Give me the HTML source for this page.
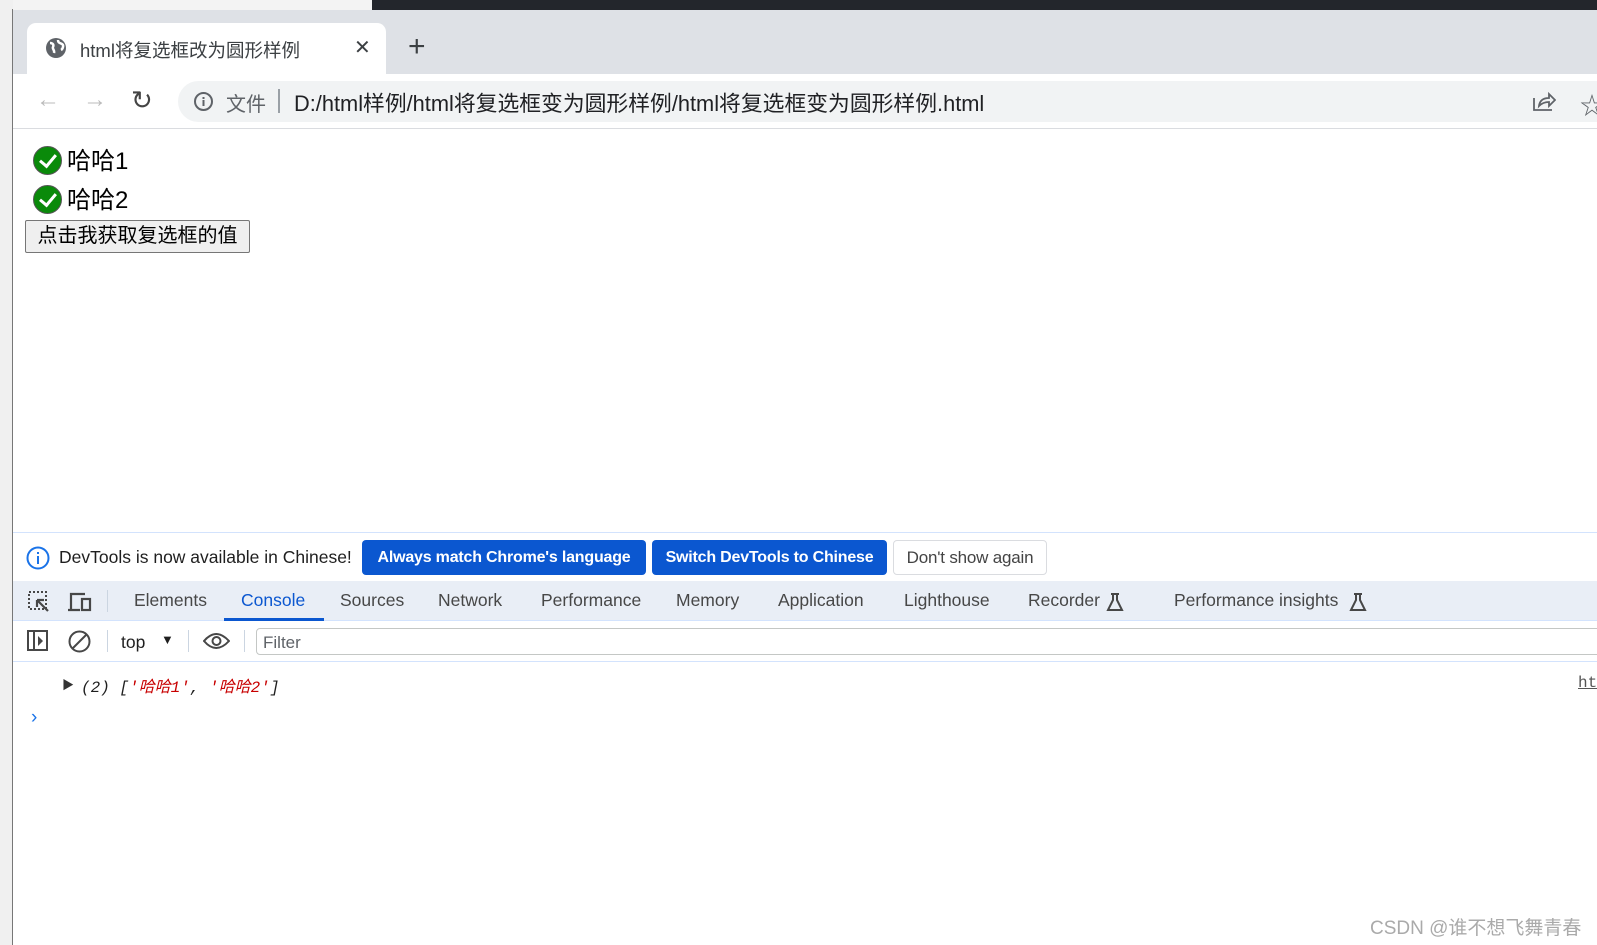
<!DOCTYPE html>
<html><head><meta charset="utf-8"><style>
*{margin:0;padding:0;box-sizing:border-box}
body{width:1597px;height:945px;overflow:hidden;background:#fff;position:relative;font-family:"Liberation Sans","Noto Sans CJK SC",sans-serif;color:#202124}
.a{position:absolute;white-space:nowrap}
.sep{position:absolute;width:1px;background:#cbd5e1}
.tab{position:absolute;top:590px;font-size:17.5px;color:#474747}
.btn{position:absolute;top:540px;height:35px;border-radius:4px;font-size:16px;font-weight:bold;line-height:35px;padding:0 6px;background:#0b57d0;color:#fff;overflow:hidden;text-align:center;letter-spacing:-0.2px}
.chk{position:absolute;left:33px;width:29px;height:29px;border-radius:50%;background:#0a8a0a;border:1px solid #555}
.chk:after{content:"";position:absolute;left:9px;top:4px;width:7px;height:13px;border:solid #fff;border-width:0 3px 3px 0;transform:rotate(40deg)}
</style></head><body>
<div class="a" style="left:0;top:0;width:13px;height:945px;background:#f0f0f0"></div>
<div class="a" style="left:13px;top:0;width:359px;height:10px;background:#f3f3f3"></div>
<div class="a" style="left:372px;top:0;width:1225px;height:10px;background:#23262c"></div>
<div class="a" style="left:12px;top:9px;width:1px;height:936px;background:#777"></div>
<div class="a" style="left:13px;top:10px;width:1584px;height:64px;background:#dee1e6"></div>
<div class="a" style="left:27px;top:23px;width:359px;height:51px;background:#fff;border-radius:9px 9px 0 0"></div>
<svg class="a" style="left:45px;top:37px" width="22" height="22" viewBox="0 0 22 22"><circle cx="11" cy="11" r="10" fill="#5f6368"/><path d="M5 6c3 0 4 2 3 4s2 3 1 6M13 3c0 3 2 3 4 4s1 5-1 6" stroke="#fff" stroke-width="2.5" fill="none"/></svg>
<div class="a" style="left:80px;top:37px;font-size:18.5px;color:#3c4043">html将复选框改为圆形样例</div>
<div class="a" style="left:354px;top:35px;font-size:20px;color:#3c4043">✕</div>
<div class="a" style="left:408px;top:30px;font-size:30px;color:#3c4043">+</div>
<div class="a" style="left:13px;top:74px;width:1584px;height:54px;background:#fff"></div>
<div class="a" style="left:13px;top:128px;width:1584px;height:1px;background:#dadce0"></div>
<div class="a" style="left:36px;top:86px;font-size:24px;color:#bbb">←</div>
<div class="a" style="left:83px;top:86px;font-size:24px;color:#bbb">→</div>
<div class="a" style="left:131px;top:85px;font-size:26px;color:#444">↻</div>
<div class="a" style="left:178px;top:81px;width:1440px;height:41px;border-radius:21px;background:#f1f3f4"></div>
<svg class="a" style="left:193px;top:91px" width="21" height="21"><circle cx="10.5" cy="10.5" r="8.5" stroke="#5f6368" stroke-width="2" fill="none"/><rect x="9.5" y="9" width="2" height="6" fill="#5f6368"/><rect x="9.5" y="6" width="2" height="2" fill="#5f6368"/></svg>
<div class="a" style="left:226px;top:88px;font-size:20px;color:#5f6368">文件</div>
<div class="a" style="left:278px;top:89px;width:2px;height:24px;background:#9aa0a6"></div>
<div class="a" style="left:294px;top:87px;font-size:21.8px;color:#202124">D:/html样例/html将复选框变为圆形样例/html将复选框变为圆形样例.html</div>
<svg class="a" style="left:1532px;top:90px" width="24" height="22"><path d="M2 8v12h18M7 16q1-8 10-8V4l6 6-6 6v-4q-6 0-10 4z" stroke="#5f6368" stroke-width="1.8" fill="none"/></svg>
<div class="a" style="left:1580px;top:86px;font-size:24px;color:#5f6368">☆</div>
<div class="chk" style="top:146px"></div>
<div class="a" style="left:67px;top:141px;font-size:24px;color:#000">哈哈1</div>
<div class="chk" style="top:185px"></div>
<div class="a" style="left:67px;top:180px;font-size:24px;color:#000">哈哈2</div>
<div class="a" style="left:25px;top:220px;width:225px;height:33px;border:1px solid #767676;border-radius:2px;background:#efefef;font-size:20px;color:#000;text-align:center;line-height:31px">点击我获取复选框的值</div>
<div class="a" style="left:13px;top:532px;width:1584px;height:1px;background:#d3e3fd"></div>
<svg class="a" style="left:26px;top:546px" width="24" height="24"><circle cx="12" cy="12" r="10.5" stroke="#1a73e8" stroke-width="2" fill="none"/><rect x="11" y="10" width="2" height="8" fill="#1a73e8"/><rect x="11" y="6" width="2" height="2" fill="#1a73e8"/></svg>
<div class="a" style="left:59px;top:547px;font-size:17.5px;color:#1f1f1f">DevTools is now available in Chinese!</div>
<div class="btn" style="left:362px;width:284px;padding:0">Always match Chrome's language</div>
<div class="btn" style="left:652px;width:235px;padding:0">Switch DevTools to Chinese</div>
<div class="btn" style="left:893px;width:154px;background:#fff;color:#444;font-weight:normal;border:1px solid #dadce0;line-height:33px;font-size:17px;padding:0">Don't show again</div>
<div class="a" style="left:13px;top:581px;width:1584px;height:40px;background:#e9eef6;border-bottom:1px solid #d3e3fd"></div>
<svg class="a" style="left:27px;top:590px" width="24" height="24"><rect x="2" y="2" width="17" height="17" stroke="#474747" stroke-width="2" stroke-dasharray="2 2" fill="none"/><path d="M10 10l11 11M10 10v7M10 10h7" stroke="#474747" stroke-width="2.2" fill="none"/></svg>
<svg class="a" style="left:67px;top:590px" width="26" height="24"><path d="M4 19V4h14M1 20h12" stroke="#474747" stroke-width="2.2" fill="none"/><rect x="15" y="9" width="8" height="11" stroke="#474747" stroke-width="2.2" fill="none"/></svg>
<div class="sep" style="left:107px;top:590px;height:22px"></div>
<div class="tab" style="left:134px">Elements</div>
<div class="tab" style="left:241px;color:#0b57d0">Console</div>
<div class="a" style="left:224px;top:618px;width:100px;height:3px;background:#0b57d0"></div>
<div class="tab" style="left:340px">Sources</div>
<div class="tab" style="left:438px">Network</div>
<div class="tab" style="left:541px">Performance</div>
<div class="tab" style="left:676px">Memory</div>
<div class="tab" style="left:778px">Application</div>
<div class="tab" style="left:904px">Lighthouse</div>
<div class="tab" style="left:1028px">Recorder</div>
<div class="tab" style="left:1174px">Performance insights</div>
<svg class="a" style="left:1106px;top:592px" width="18" height="20"><path d="M5 2h8M7 2v6L2 18h14L11 8V2" stroke="#474747" stroke-width="2" fill="none"/></svg>
<svg class="a" style="left:1349px;top:592px" width="18" height="20"><path d="M5 2h8M7 2v6L2 18h14L11 8V2" stroke="#474747" stroke-width="2" fill="none"/></svg>
<svg class="a" style="left:27px;top:630px" width="22" height="22"><rect x="1" y="1" width="19" height="19" stroke="#474747" stroke-width="2" fill="none"/><path d="M7 1v19" stroke="#474747" stroke-width="2"/><path d="M11 6l5 5-5 5z" fill="#474747"/></svg>
<svg class="a" style="left:68px;top:630px" width="23" height="23"><circle cx="11.5" cy="11.5" r="10" stroke="#474747" stroke-width="2" fill="none"/><path d="M5 18L18 5" stroke="#474747" stroke-width="2"/></svg>
<div class="sep" style="left:107px;top:630px;height:22px"></div>
<div class="a" style="left:121px;top:632px;font-size:17.5px;color:#1f1f1f">top</div>
<div class="a" style="left:161px;top:632px;font-size:13px;color:#1f1f1f">▼</div>
<div class="sep" style="left:188px;top:630px;height:22px"></div>
<svg class="a" style="left:203px;top:631px" width="27" height="20"><path d="M1 10Q13 -4 26 10Q13 24 1 10z" stroke="#474747" stroke-width="2" fill="none"/><circle cx="13.5" cy="10" r="4" stroke="#474747" stroke-width="2" fill="none"/></svg>
<div class="sep" style="left:244px;top:630px;height:22px"></div>
<div class="a" style="left:256px;top:628px;width:1360px;height:27px;border:1px solid #c4c7c5;border-radius:4px"></div>
<div class="a" style="left:263px;top:633px;font-size:17px;color:#5f6368">Filter</div>
<div class="a" style="left:13px;top:661px;width:1584px;height:1px;background:#d3e3fd"></div>
<div class="a" style="left:62px;top:676px;font-size:12px;color:#333">▶</div>
<div class="a" style="left:81px;top:673px;font-size:16px;font-style:italic;font-family:'Liberation Mono','Noto Sans CJK SC',monospace;color:#1f1f1f">(2) [<span style="color:#c80000">'哈哈1'</span>, <span style="color:#c80000">'哈哈2'</span>]</div>
<div class="a" style="left:1578px;top:674px;font-size:16px;font-family:'Liberation Mono',monospace;color:#555;text-decoration:underline">ht</div>
<div class="a" style="left:31px;top:707px;font-size:19px;color:#1a73e8">›</div>
<div class="a" style="left:1370px;top:913px;font-size:19px;color:#aaa">CSDN @谁不想飞舞青春</div>
</body></html>
